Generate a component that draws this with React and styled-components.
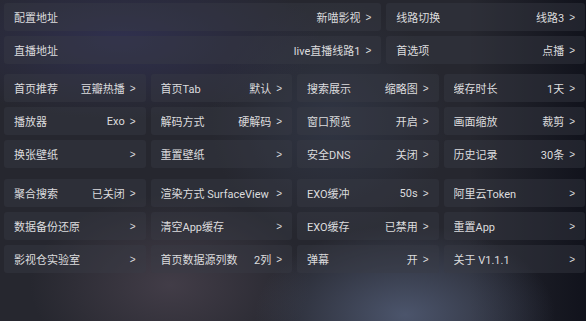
import React from "react";
import styled, { createGlobalStyle } from "styled-components";

const GlobalStyle = createGlobalStyle`
  html, body {
    margin: 0;
    padding: 0;
    width: 586px;
    height: 321px;
    overflow: hidden;
    background: #25262e;
  }
`;

const topRows = [
  [
    { label: "配置地址", value: "新喵影视" },
    { label: "线路切换", value: "线路3" },
  ],
  [
    { label: "直播地址", value: "live直播线路1" },
    { label: "首选项", value: "点播" },
  ],
];

const groupA = [
  { label: "首页推荐", value: "豆瓣热播" },
  { label: "首页Tab", value: "默认" },
  { label: "搜索展示", value: "缩略图" },
  { label: "缓存时长", value: "1天" },
  { label: "播放器", value: "Exo" },
  { label: "解码方式", value: "硬解码" },
  { label: "窗口预览", value: "开启" },
  { label: "画面缩放", value: "裁剪" },
  { label: "换张壁纸", value: "" },
  { label: "重置壁纸", value: "" },
  { label: "安全DNS", value: "关闭" },
  { label: "历史记录", value: "30条" },
];

const groupB = [
  { label: "聚合搜索", value: "已关闭" },
  { label: "渲染方式 SurfaceView", value: "" },
  { label: "EXO缓冲", value: "50s" },
  { label: "阿里云Token", value: "" },
  { label: "数据备份还原", value: "" },
  { label: "清空App缓存", value: "" },
  { label: "EXO缓存", value: "已禁用" },
  { label: "重置App", value: "" },
  { label: "影视仓实验室", value: "" },
  { label: "首页数据源列数", value: "2列" },
  { label: "弹幕", value: "开" },
  { label: "关于  V1.1.1", value: "" },
];

function Item({ label, value, wide }) {
  return (
    <Card $wide={wide}>
      <Label>{label}</Label>
      <Value>
        {value}
        <Chevron>&gt;</Chevron>
      </Value>
    </Card>
  );
}

export default function App() {
  return (
    <>
      <GlobalStyle />
      <Screen>
        {topRows.map((row, i) => (
          <TopRow key={i}>
            <Item label={row[0].label} value={row[0].value} wide />
            <Item label={row[1].label} value={row[1].value} />
          </TopRow>
        ))}
        <Grid>
          {groupA.map((it) => (
            <Item key={it.label} label={it.label} value={it.value} />
          ))}
        </Grid>
        <Grid $late>
          {groupB.map((it) => (
            <Item key={it.label} label={it.label} value={it.value} />
          ))}
        </Grid>
      </Screen>
    </>
  );
}

const Screen = styled.div`
  width: 586px;
  height: 321px;
  box-sizing: border-box;
  padding: 3px 1px 0 4px;
  display: flex;
  flex-direction: column;
  gap: 5px;
  font-family: Roboto, "Noto Sans CJK SC", sans-serif;
  font-size: 11px;
  color: #dcdcde;
  background:
    radial-gradient(ellipse 150px 90px at 405px 315px, rgba(88, 100, 128, 0.75), transparent),
    radial-gradient(ellipse 140px 90px at 170px 285px, rgba(78, 70, 82, 0.7), transparent),
    radial-gradient(ellipse 200px 80px at 120px 40px, rgba(52, 52, 92, 0.7), transparent),
    radial-gradient(ellipse 120px 120px at 330px 120px, rgba(60, 70, 92, 0.45), transparent),
    linear-gradient(90deg, transparent 80%, rgba(8, 10, 20, 0.7) 100%),
    #26272f;
`;

const TopRow = styled.div`
  display: flex;
  gap: 5px;
`;

const Grid = styled.div`
  display: grid;
  grid-template-columns: repeat(4, 1fr);
  grid-auto-rows: 28px;
  gap: 5px;
  margin-top: ${(p) => (p.$late ? "6px" : "5px")};
`;

const Card = styled.div`
  flex: ${(p) => (p.$wide ? 2 : 1)};
  height: 28px;
  min-width: 0;
  box-sizing: border-box;
  padding: 0 10px;
  display: flex;
  align-items: center;
  justify-content: space-between;
  border-radius: 3px;
  background: rgba(58, 60, 70, 0.4);
  white-space: nowrap;
`;

const Label = styled.span`
  overflow: hidden;
`;

const Value = styled.span`
  display: flex;
  align-items: center;
`;

const Chevron = styled.span`
  margin-left: 5px;
  font-family: "Liberation Sans", sans-serif;
  font-size: 10px;
`;
